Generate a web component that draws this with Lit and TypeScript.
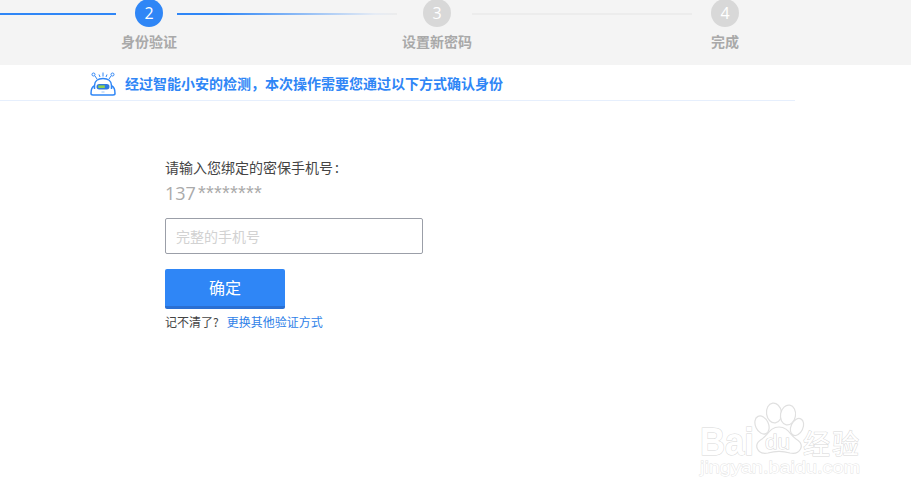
import { LitElement, html, css, svg } from "lit";
import { customElement } from "lit/decorators.js";

const robot = svg`<svg class="robot" width="26" height="25" viewBox="0 0 26 25" fill="none" stroke="#2f86f6">
  <circle cx="3.5" cy="3.5" r="1.5" stroke-width="1"/><circle cx="22.5" cy="3.5" r="1.5" stroke-width="1"/>
  <path d="M5 5 L7 8 M21 5 L19 8" stroke-width="1"/>
  <path d="M9 3.5 l1 2.5 M13 1.5 v4 M17 3.5 l-1 2.5" stroke-width="1"/>
  <path d="M4.5 18 V14.5 C4.5 10 8 7.5 13 7.5 C18 7.5 21.5 10 21.5 14.5 V18" stroke-width="1.5"/>
  <path d="M4 15 C2 16 1 20 1 22.5 C1 23.5 1.6 24 3 24 H23 C24.4 24 25 23.5 25 22.5 C25 20 24 16 22 15" stroke-width="1.5"/>
  <rect x="6.5" y="13" width="13" height="5.4" rx="2.7" fill="#2f7be0" stroke="none"/>
  <rect x="8.3" y="14.4" width="6.5" height="2.6" fill="#8fd14f" stroke="none"/>
  <path d="M11.5 21 h3" stroke="#9cc4f8" stroke-width="1"/>
</svg>`;

const watermark = svg`<svg class="wm" width="180" height="95" viewBox="0 0 180 95">
  <g fill="#fff" stroke="#e0e0e0" stroke-width="1.2">
    <ellipse cx="72" cy="30" rx="6.5" ry="9.5" transform="rotate(-25 72 30)"/>
    <ellipse cx="84" cy="18" rx="7.5" ry="10" transform="rotate(-8 84 18)"/>
    <ellipse cx="98" cy="20" rx="7.5" ry="10" transform="rotate(10 98 20)"/>
    <ellipse cx="107" cy="32" rx="6" ry="9" transform="rotate(25 107 32)"/>
    <path d="M89 32 C80 32 78 40 72 44 C62 50 68 60 78 58 C85 56 93 56 100 58 C110 60 116 50 106 44 C100 40 98 32 89 32 Z"/>
  </g>
  <g font-family="'Liberation Sans',sans-serif" fill="#fff" stroke="#d8d8d8" stroke-width="1" paint-order="stroke">
    <text x="10" y="60" font-size="38" font-weight="700" textLength="54" lengthAdjust="spacingAndGlyphs">Bai</text>
    <text x="75" y="54" font-size="20" textLength="25" lengthAdjust="spacingAndGlyphs">du</text>
    <text x="113" y="59" font-size="27" font-family="'Noto Sans CJK SC',sans-serif" textLength="56">经验</text>
    <text x="10" y="78" font-size="17" stroke="#e2e2e2" stroke-width="0.8" textLength="160" lengthAdjust="spacingAndGlyphs">jingyan.baidu.com</text>
  </g>
</svg>`;

@customElement("app-root")
export class AppRoot extends LitElement {
  static styles = css`
    :host {
      display: block;
      position: relative;
      width: 911px;
      height: 501px;
      overflow: hidden;
      background: #fff;
      font-family: "Noto Sans CJK SC", "Liberation Sans", sans-serif;
    }
    .steps {
      height: 65px;
      background: #f4f4f4;
      display: flex;
      align-items: flex-start;
      overflow: hidden;
    }
    .line {
      height: 2px;
      margin-top: 13px;
      flex: none;
      background: #ececec;
    }
    .line.first { width: 116px; margin-right: 19px; background: #2f86f6; }
    .line.active {
      width: 220px;
      margin: 13px 26px 0 14px;
      background: linear-gradient(90deg, #2f86f6 0%, #2f86f6 20%, #e6ecf5 90%, #ececec 100%);
    }
    .line.rest { width: 220px; margin: 13px 19px 0 21px; }
    .step {
      width: 28px;
      flex: none;
      display: flex;
      flex-direction: column;
      align-items: center;
      margin-top: -1px;
    }
    .dot {
      width: 28px;
      height: 28px;
      border-radius: 50%;
      background: #d8d8d8;
      color: #fff;
      font: 16px/28px "Open Sans", "Liberation Sans", sans-serif;
      text-align: center;
      flex: none;
    }
    .step.on .dot { background: #2f86f6; }
    .lbl {
      margin-top: 4px;
      font-size: 14px;
      line-height: 20px;
      font-weight: 700;
      color: #a9a9a9;
      white-space: nowrap;
    }
    .notice {
      width: 795px;
      height: 36px;
      box-sizing: border-box;
      border-bottom: 1px solid #e6effd;
      padding: 6px 0 0 90px;
      display: flex;
      align-items: flex-start;
      gap: 9px;
    }
    .robot { flex: none; }
    .notice span {
      font-size: 14px;
      line-height: 24px;
      font-weight: 700;
      color: #2f86f6;
      white-space: nowrap;
    }
    .form {
      padding: 56px 0 0 165px;
      display: flex;
      flex-direction: column;
      align-items: flex-start;
    }
    .title {
      font-size: 14px;
      line-height: 20px;
      color: #444;
    }
    .colon { margin-left: 2px; }
    .phone {
      font: 18px/24px "Open Sans", "Liberation Sans", sans-serif;
      color: #aaa;
      height: 24px;
      margin-bottom: 13px;
      margin-top: 4px;
      white-space: nowrap;
    }
    .stars {
      font: 20px/24px "Liberation Sans", sans-serif;
      margin-left: 2px;
      letter-spacing: 0.25px;
    }
    .input {
      width: 258px;
      height: 36px;
      box-sizing: border-box;
      border: 1px solid #9b9fa8;
      border-radius: 2px;
      padding-left: 10px;
      font-size: 14px;
      line-height: 34px;
      color: #d2d2d2;
    }
    .btn {
      margin-top: 15px;
      width: 120px;
      height: 40px;
      box-sizing: border-box;
      background: #2f86f6;
      border-bottom: 3px solid #2a6fd2;
      border-radius: 2px;
      color: #fff;
      font-size: 16px;
      line-height: 37px;
      text-align: center;
    }
    .help {
      margin-top: 4px;
      font-size: 12px;
      line-height: 18px;
      color: #444;
      display: flex;
      gap: 8px;
    }
    .help a { color: #2f7fe8; }
    .wm { position: absolute; left: 690px; top: 395px; }
  `;

  render() {
    return html`
      <div class="steps">
        <div class="line first"></div>
        <div class="step on"><div class="dot">2</div><div class="lbl">身份验证</div></div>
        <div class="line active"></div>
        <div class="step"><div class="dot">3</div><div class="lbl">设置新密码</div></div>
        <div class="line rest"></div>
        <div class="step"><div class="dot">4</div><div class="lbl">完成</div></div>
      </div>
      <div class="notice">${robot}<span>经过智能小安的检测，本次操作需要您通过以下方式确认身份</span></div>
      <div class="form">
        <div class="title">请输入您绑定的密保手机号<span class="colon">:</span></div>
        <div class="phone">137<span class="stars">********</span></div>
        <div class="input">完整的手机号</div>
        <div class="btn">确定</div>
        <div class="help"><span>记不清了?</span><a>更换其他验证方式</a></div>
      </div>
      ${watermark}
    `;
  }
}
